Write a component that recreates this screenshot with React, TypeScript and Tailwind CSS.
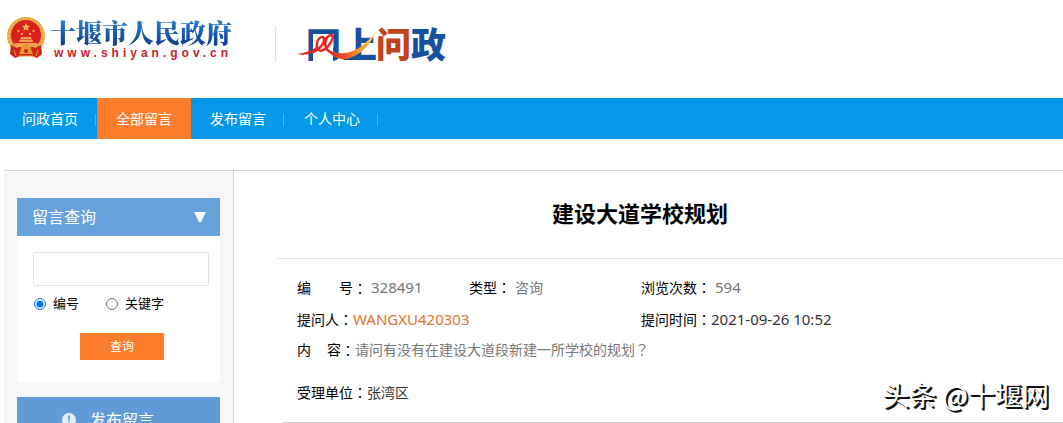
import { useState } from 'react';

const NAV_ITEMS = ['问政首页', '全部留言', '发布留言', '个人中心'];

const SEARCH_MODES = [
  { value: 'number', label: '编号' },
  { value: 'keyword', label: '关键字' },
];

function Emblem() {
  return (
    <svg viewBox="0 0 40 42" className="h-[42px] w-10 shrink-0" aria-hidden="true">
      <circle cx="20" cy="19" r="19" fill="#e9a545" />
      <circle cx="20" cy="19" r="17" fill="none" stroke="#f0bc62" strokeWidth="1.5" strokeDasharray="2 2" />
      <circle cx="20" cy="18" r="15" fill="#d9201c" />
      <path
        d="M20 6l1.200 2.600 2.900.300-2.200 1.900.700 2.900-2.600-1.500-2.600 1.500.700-2.900-2.200-1.900 2.900-.300z"
        fill="#f6b65c"
      />
      <g fill="#f0a050">
        <circle cx="12.500" cy="14" r="1.200" />
        <circle cx="16" cy="17" r="1.200" />
        <circle cx="24" cy="17" r="1.200" />
        <circle cx="27.500" cy="14" r="1.200" />
        <path d="M15 20h10l1 2.500H14zM13 23h14v2H13zM9 26h22l1 4H8z" />
      </g>
      <path d="M5 28l6 3h18l6-3 1 9-5 4-5-2H14l-5 2-5-4z" fill="#cf2218" />
      <path d="M15 32a5 5 0 0 1 10 0l2 5H13z" fill="#e8983a" />
      <circle cx="20" cy="34" r="2" fill="#cf2218" />
      <path d="M8 33l2 6M32 33l-2 6M13 39h14" stroke="#e8983a" fill="none" />
    </svg>
  );
}

function SectionLogo() {
  return (
    <svg viewBox="0 0 152 60" className="h-[60px] w-[152px] shrink-0" role="img" aria-label="网上问政">
      <defs>
        <linearGradient id="swoosh" x1="0" y1="0" x2="1" y2="0">
          <stop offset="0" stopColor="#dd2a22" />
          <stop offset="0.3" stopColor="#e8452a" />
          <stop offset="0.6" stopColor="#f08a2c" />
          <stop offset="1" stopColor="#f9d24a" />
        </linearGradient>
      </defs>
      <g
        fontSize="35"
        fontWeight="900"
        fill="#17509f"
        style={{ fontFamily: '"Noto Sans CJK SC", sans-serif' }}
      >
        <text x="10" y="44">网</text>
        <rect x="17" y="20" width="20" height="30" fill="#fff" />
        <text x="46" y="44">上</text>
        <text x="80" y="44" fill="#c2421c">问</text>
        <text x="115" y="44">政</text>
      </g>
      <path d="M1 40c8-1 15-3 20-8l2 2c-6 6-14 8-22 6z" fill="#d8281f" />
      <path
        d="M17 38c8-3 12-10 11-14-3-3-8 2-7 9 1 6 8 4 12-2 4-5 5-10 2-10-5 1-7 8-5 13 2 4 5 5 9 6"
        fill="none"
        stroke="#e02a22"
        strokeWidth="2.500"
        strokeLinecap="round"
      />
      <path d="M32 35c6 4 12 5 18 4 11-2 19-9 29-20-5 13-15 22-28 26-9 1-15-3-19-8z" fill="url(#swoosh)" />
    </svg>
  );
}

function Header() {
  return (
    <header className="flex h-[98px] shrink-0 items-start pl-1.5">
      <a href="#" className="mt-[17px] flex items-start">
        <Emblem />
        <span className="ml-1 flex flex-col">
          <span className="bg-linear-to-b from-[#2a86d6] to-[#12388c] bg-clip-text font-['Noto_Serif_CJK_SC','Noto_Sans_CJK_SC',serif] text-[26px] leading-[30px] font-black text-transparent">
            十堰市人民政府
          </span>
          <span className="pl-1 font-['Liberation_Sans',sans-serif] text-xs leading-3 font-bold tracking-[4px] text-[#c8202c]">
            www.shiyan.gov.cn
          </span>
        </span>
      </a>
      <div className="mt-[26px] ml-[43px] h-9 w-px bg-[#dddddd]" />
      <a href="#" className="mt-3.5 ml-5">
        <SectionLogo />
      </a>
    </header>
  );
}

function NavBar() {
  const [current, setCurrent] = useState('全部留言');

  return (
    <nav className="flex h-[41px] shrink-0 bg-[#0598e8] pl-[3px] text-sm text-white">
      {NAV_ITEMS.map((item) => (
        <a
          key={item}
          href="#"
          onClick={() => setCurrent(item)}
          className={`relative flex w-[94px] items-center justify-center ${
            item === current ? 'bg-[#fb7c2a]' : ''
          }`}
        >
          {item}
          {item !== current && <span className="absolute top-4 right-[1px] h-3 w-px bg-[#45b4f0]" />}
        </a>
      ))}
    </nav>
  );
}

function Sidebar() {
  const [mode, setMode] = useState('number');

  return (
    <aside className="w-[230px] shrink-0 border-r border-[#d4d4d4] bg-[#f7f7fa] px-[13px] pt-[27px]">
      <section className="bg-white">
        <h2 className="flex h-[38px] items-center justify-between bg-[#68a2dc] pr-3.5 pl-[15px] text-base text-white">
          留言查询
          <svg viewBox="0 0 12 10" className="h-2.5 w-3" aria-hidden="true">
            <path d="M0 0h12L7 10H5z" fill="#fff" />
          </svg>
        </h2>
        <form className="px-4 pt-4 pb-[22px]" onSubmit={(e) => e.preventDefault()}>
          <input
            type="text"
            aria-label="留言查询"
            className="h-[34px] w-44 rounded-xs border border-[#e2e2e2] bg-white px-2 text-sm"
          />
          <div className="mt-2 flex h-5 items-center text-[13px] text-black">
            {SEARCH_MODES.map(({ value, label }) => (
              <label key={value} className="mr-6.5 flex items-center gap-1.5 last:mr-0">
                <input
                  type="radio"
                  name="mode"
                  checked={mode === value}
                  onChange={() => setMode(value)}
                  className="mx-px h-3 w-3"
                />
                {label}
              </label>
            ))}
          </div>
          <button
            type="submit"
            className="mt-[19px] ml-[47px] block h-[27px] w-[84px] bg-[#fb7c2a] text-xs text-white"
          >
            查询
          </button>
        </form>
      </section>

      <a href="#" className="mt-[15px] flex h-[45px] items-center gap-3.5 bg-[#609bd8] pl-[45px] text-base text-white">
        <svg viewBox="0 0 14 14" className="h-3.5 w-3.5" aria-hidden="true">
          <circle cx="7" cy="7" r="7" fill="#e4eefa" />
          <path d="M6 2.500h2L7.600 8.500H6.400z" fill="#609bd8" />
          <circle cx="7" cy="10.500" r="1" fill="#609bd8" />
        </svg>
        发布留言
      </a>
    </aside>
  );
}

// Full-width punctuation sits in the middle of its cell in the TC face
function Mark({ children }: { children: string }) {
  return <span className="font-['Noto_Sans_CJK_TC',sans-serif]">{children}</span>;
}

function Message() {
  return (
    <main className="min-w-0 flex-1 pl-[43px] text-sm leading-5 text-black">
      <h1 className="border-b border-[#e6e6e6] pt-[26px] pr-[60px] pb-[29px] text-center text-[22px] leading-8 font-bold">
        建设大道学校规划
      </h1>
      <div className="pt-[18px] pl-5">
        <dl className="grid grid-cols-[172px_172px_1fr]">
          <div className="flex h-5 items-baseline">
            <dt className="flex">
              <span className="mr-7">编</span>号<Mark>：</Mark>
            </dt>
            <dd className="ml-1 text-[15px] leading-5 text-[#777777]">328491</dd>
          </div>
          <div className="flex h-5 items-baseline">
            <dt>
              类型<Mark>：</Mark>
            </dt>
            <dd className="ml-1 text-[#777777]">咨询</dd>
          </div>
          <div className="flex h-5 items-baseline">
            <dt>
              浏览次数<Mark>：</Mark>
            </dt>
            <dd className="ml-1 text-[15px] leading-5 text-[#777777]">594</dd>
          </div>
        </dl>
        <dl className="mt-3 grid grid-cols-[344px_1fr]">
          <div className="flex h-5 items-baseline">
            <dt>
              提问人<Mark>：</Mark>
            </dt>
            <dd className="text-[15px] leading-5 text-[#e2732f]">WANGXU420303</dd>
          </div>
          <div className="flex h-5 items-baseline">
            <dt>
              提问时间<Mark>：</Mark>
            </dt>
            <dd className="text-[15px] leading-5 text-[#333333]">2021-09-26 10:52</dd>
          </div>
        </dl>
        <dl className="mt-2.5">
          <div className="flex h-5 items-baseline">
            <dt className="flex">
              <span className="mr-4">内</span>容<Mark>：</Mark>
            </dt>
            <dd className="text-[#777777]">
              请问有没有在建设大道段新建一所学校的规划<Mark>？</Mark>
            </dd>
          </div>
          <div className="mt-[23px] flex h-5 items-baseline">
            <dt>
              受理单位<Mark>：</Mark>
            </dt>
            <dd className="text-[#333333]">张湾区</dd>
          </div>
        </dl>
      </div>
      <hr className="mt-5 ml-1.5 border-[#cccccc]" />
    </main>
  );
}

export default function App() {
  return (
    <div className="relative flex h-screen flex-col overflow-hidden bg-white font-['Noto_Sans','Noto_Sans_CJK_SC',sans-serif]">
      <Header />
      <NavBar />
      <div className="mt-[31px] ml-1 flex shrink-0 border-t border-[#d4d4d4]">
        <Sidebar />
        <Message />
      </div>
      <div className="absolute right-3.5 bottom-2.5 font-['Noto_Sans_CJK_SC',sans-serif] text-[27px] leading-9 text-white [text-shadow:2px_2px_0_#111111,1px_1px_0_#111111]">
        头条 @十堰网
      </div>
    </div>
  );
}
